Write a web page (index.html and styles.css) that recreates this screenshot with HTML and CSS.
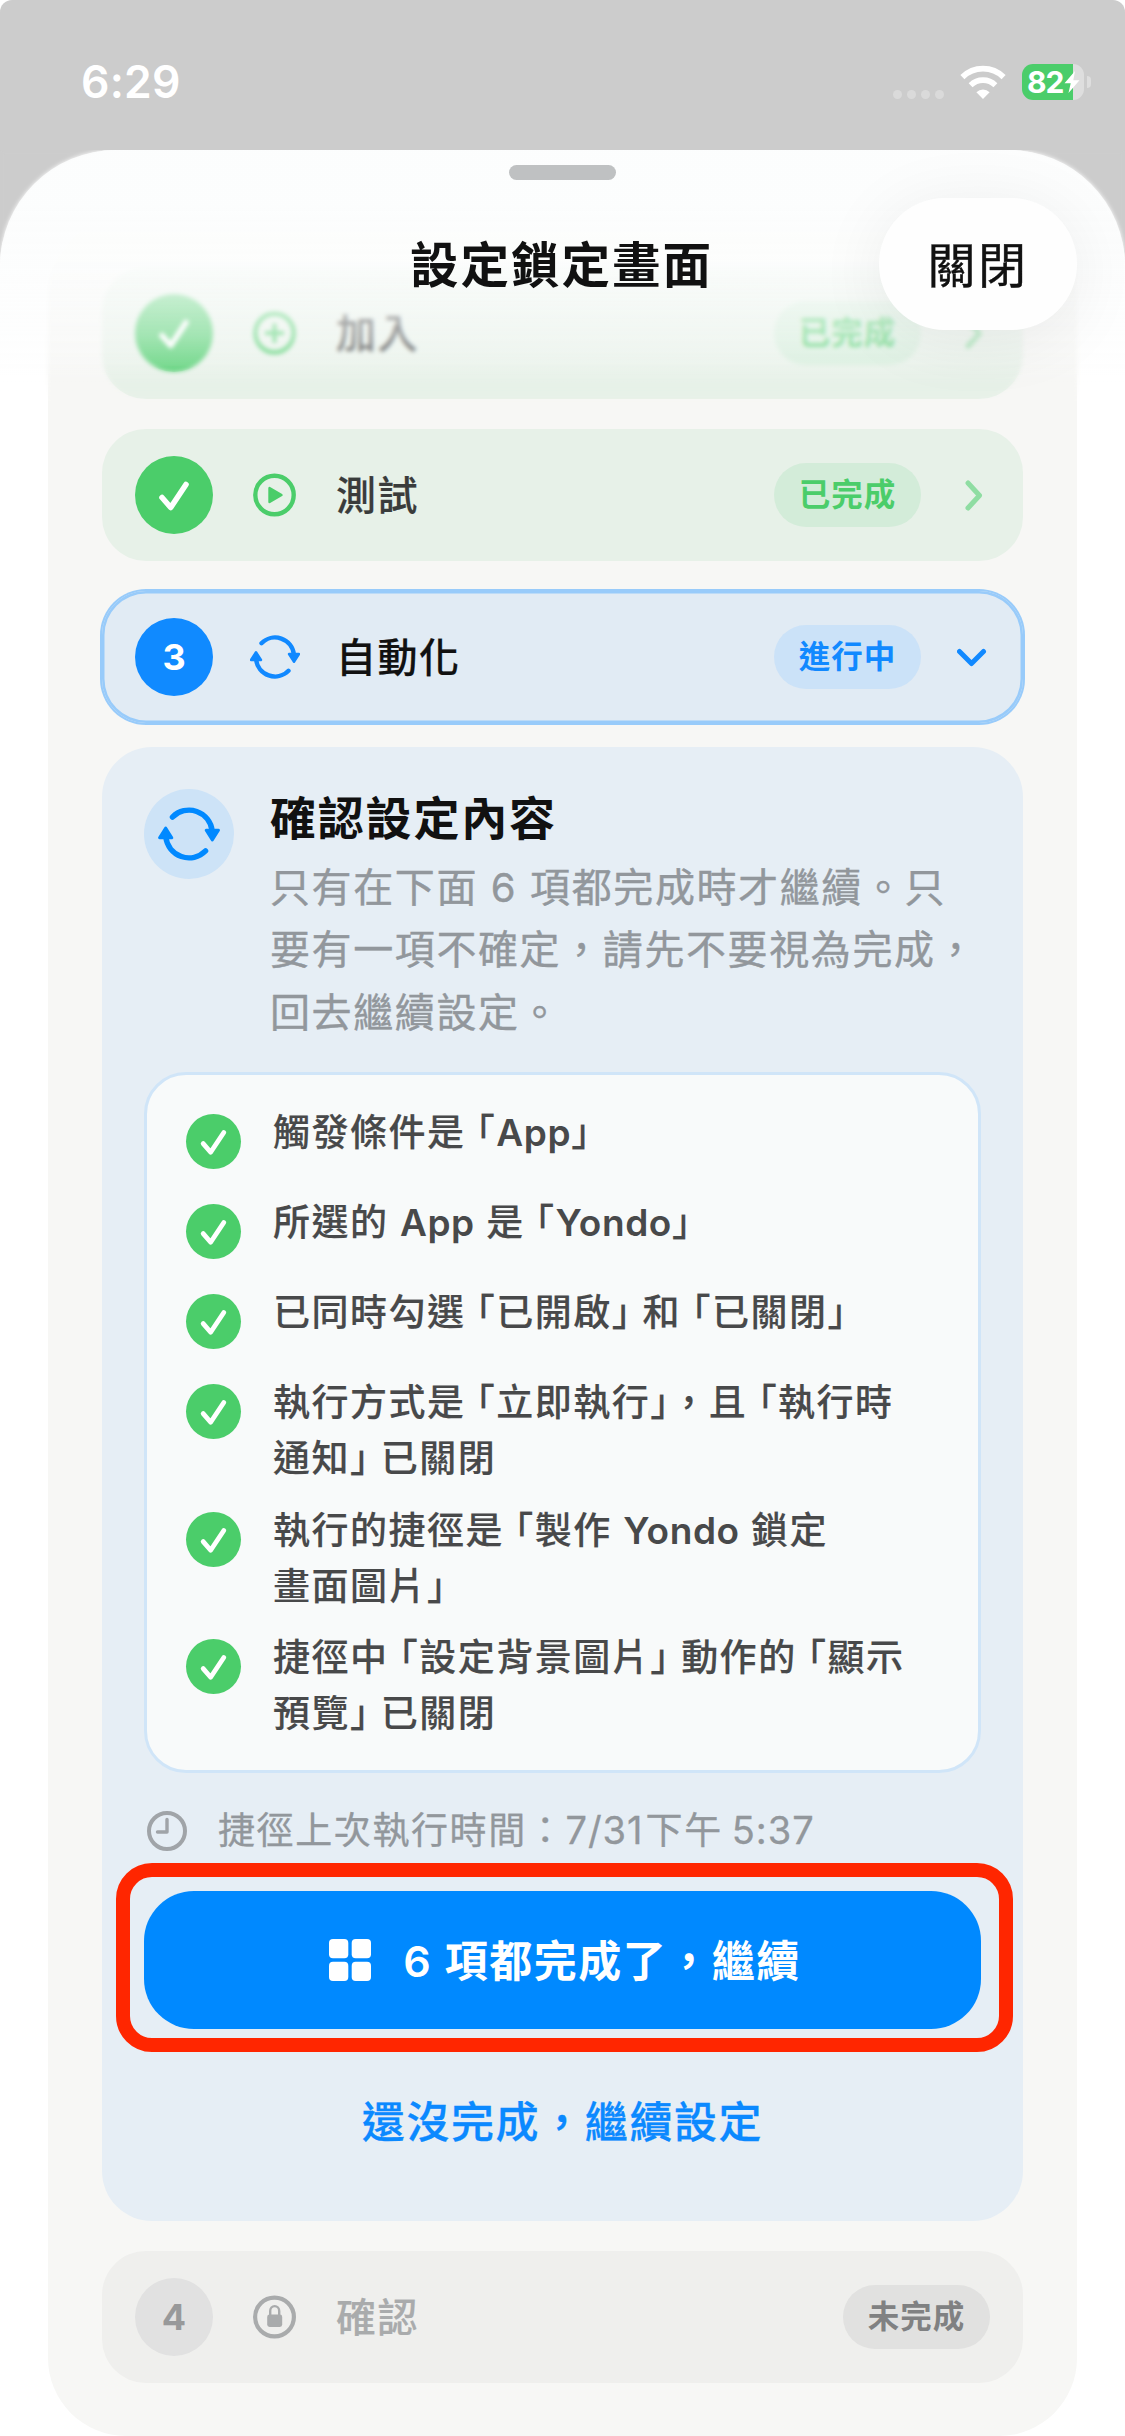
FILE: index.html
```html
<!DOCTYPE html>
<html lang="zh-Hant">
<head>
<meta charset="utf-8">
<title>設定鎖定畫面</title>
<link rel="stylesheet" href="styles.css">
</head>
<body>
<svg class="defs" width="0" height="0" aria-hidden="true">
  <symbol id="check" viewBox="0 0 78 78"><path d="M27 41.5 35.7 51.5 51 28.5" fill="none" stroke="currentColor" stroke-width="5.6" stroke-linecap="round" stroke-linejoin="round"/></symbol>
  <symbol id="sync" viewBox="0 0 50 44">
    <path d="M11.5 8.2A19 19 0 0 1 43.9 19.5" fill="none" stroke="currentColor" stroke-width="4.4" stroke-linecap="round"/>
    <path d="M38.5 35.8A19 19 0 0 1 6.1 24.5" fill="none" stroke="currentColor" stroke-width="4.4" stroke-linecap="round"/>
    <path d="M39 19h10l-5 7.8z" fill="currentColor" stroke="currentColor" stroke-width="2.4" stroke-linejoin="round"/>
    <path d="M11 25H1l5-7.8z" fill="currentColor" stroke="currentColor" stroke-width="2.4" stroke-linejoin="round"/>
  </symbol>
</svg>

<div class="screen">
  <header class="status">
    <span class="time">6:29</span>
    <div class="status-icons">
      <span class="dots"><i></i><i></i><i></i><i></i></span>
      <svg class="wifi" viewBox="0 0 46 34">
        <path d="M23 34l-6.6-6.8a9.6 9.6 0 0 1 13.2 0z" fill="#fff"/>
        <path d="M10.6 20.2a17.8 17.8 0 0 1 24.8 0" fill="none" stroke="#fff" stroke-width="5.6"/>
        <path d="M2.4 12.1a29.4 29.4 0 0 1 41.2 0" fill="none" stroke="#fff" stroke-width="5.8"/>
      </svg>
      <div class="battery"><span class="level">82</span>
        <svg class="bolt" viewBox="0 0 16 22"><path d="M11 0 .5 12.2h6.2L4.5 22 15.5 9.3H9.3z" fill="#fff"/></svg>
      </div>
      <i class="nub"></i>
    </div>
  </header>

  <main class="sheet">
    <section class="card">
      <div class="row done">
        <span class="disc"><svg><use href="#check"/></svg></span>
        <svg class="glyph" viewBox="0 0 50 44"><circle cx="24.5" cy="22" r="19.2" fill="none" stroke="currentColor" stroke-width="4.4"/><path d="M24.5 14v16M16.5 22h16" stroke="currentColor" stroke-width="4" stroke-linecap="round"/></svg>
        <span class="name">加入</span>
        <span class="badge">已完成</span>
        <svg class="chev" viewBox="0 0 33 33"><path d="M11 4l11.5 12.5L11 29" /></svg>
      </div>
      <div class="row done">
        <span class="disc"><svg><use href="#check"/></svg></span>
        <svg class="glyph" viewBox="0 0 50 44"><circle cx="24.5" cy="22" r="19.2" fill="none" stroke="currentColor" stroke-width="4.4"/><path d="M19.5 15v14l12-7z" fill="currentColor" stroke="currentColor" stroke-width="2.4" stroke-linejoin="round"/></svg>
        <span class="name">測試</span>
        <span class="badge">已完成</span>
        <svg class="chev" viewBox="0 0 33 33"><path d="M11 4l11.5 12.5L11 29" /></svg>
      </div>
      <div class="row active">
        <span class="disc">3</span>
        <svg class="glyph"><use href="#sync"/></svg>
        <span class="name">自動化</span>
        <span class="badge">進行中</span>
        <svg class="chev" viewBox="0 0 33 33"><path d="M2.5 10.5l12 12 12-12" /></svg>
      </div>

      <div class="panel">
        <div class="intro">
          <span class="intro-icon"><svg><use href="#sync"/></svg></span>
          <div>
            <h2>確認設定內容</h2>
            <p>只有在下面 6 項都完成時才繼續。只<br>要有一項不確定，請先不要視為完成，<br>回去繼續設定。</p>
          </div>
        </div>

        <ul class="list">
          <li><span class="tick"><svg><use href="#check"/></svg></span><span>觸發條件<b>是</b>「<em>App</em>」</span></li>
          <li><span class="tick"><svg><use href="#check"/></svg></span><span>所選的 <em>App</em> <b>是</b>「<em>Yondo</em>」</span></li>
          <li><span class="tick"><svg><use href="#check"/></svg></span><span>已同時勾<b>選</b>「已開啟<b>」和</b>「已關閉」</span></li>
          <li><span class="tick"><svg><use href="#check"/></svg></span><span>執行方式<b>是</b>「立即執行」，<b>且</b>「執行時<br>通知<b>」</b>已關閉</span></li>
          <li><span class="tick"><svg><use href="#check"/></svg></span><span>執行的捷徑<b>是</b>「製作 <em>Yondo</em> 鎖定<br>畫面圖片」</span></li>
          <li><span class="tick"><svg><use href="#check"/></svg></span><span>捷徑<b>中</b>「設定背景圖片<b>」</b>動作<b>的</b>「顯示<br>預覽<b>」</b>已關閉</span></li>
        </ul>

        <div class="last-run">
          <svg viewBox="0 0 40 40"><circle cx="20" cy="20" r="18" fill="none" stroke="currentColor" stroke-width="4"/><path d="M20 8.5V21H10.5" fill="none" stroke="currentColor" stroke-width="3.4" stroke-linecap="round" stroke-linejoin="round"/></svg>
          <span>捷徑上次執行時間：<span class="latin">7/31</span><span class="noon">下午</span> <span class="latin">5:37</span></span>
        </div>

        <div class="cta-wrap">
          <button class="cta">
            <svg viewBox="0 0 42 42"><g fill="currentColor"><rect width="19.3" height="19.3" rx="4"/><rect x="22.7" width="19.3" height="19.3" rx="4"/><rect y="22.7" width="19.3" height="19.3" rx="4"/><rect x="22.7" y="22.7" width="19.3" height="19.3" rx="4"/></g></svg>
            <span>6 項都完成了，繼續</span>
          </button>
          <div class="highlight"></div>
        </div>
        <a class="later">還沒完成，繼續設定</a>
      </div>

      <div class="row todo">
        <span class="disc">4</span>
        <svg class="glyph" viewBox="0 0 50 44"><circle cx="24.5" cy="22" r="19.4" fill="none" stroke="currentColor" stroke-width="4.2"/><rect x="17.2" y="19.5" width="15" height="12.4" rx="2.4" fill="currentColor"/><path d="M20.2 20v-4a4.5 4.9 0 0 1 9 0v4" fill="none" stroke="currentColor" stroke-width="2.4"/></svg>
        <span class="name">確認</span>
        <span class="badge">未完成</span>
      </div>
    </section>

    <div class="nav">
      <div class="fade"></div>
      <i class="grabber"></i>
      <h1>設定鎖定畫面</h1>
      <button class="close">關閉</button>
    </div>
  </main>
</div>
</body>
</html>
```
FILE: styles.css
```css
* { box-sizing: border-box; }

body {
  margin: 0;
  background: #fff;
  font-family: Inter, "Noto Sans CJK TC", sans-serif;
  -webkit-font-smoothing: antialiased;
}

h1, h2, p, ul { margin: 0; padding: 0; }
button { border: 0; font-family: inherit; padding: 0; }
i { display: block; }
.defs { position: absolute; }

.screen {
  width: 1125px;
  height: 2436px;
  overflow: hidden;
  border-radius: 12px 12px 0 0;
  background: linear-gradient(#ccc 300px, #fff 300px);
}

/* status bar */
.status {
  height: 150px;
  padding: 64px 34px 0 81px;
  display: flex;
  justify-content: space-between;
  color: #fff;
}
.time { font-size: 44.5px; font-weight: 600; line-height: 37px; letter-spacing: 0.2px; }
.status-icons { display: flex; height: 36px; align-items: center; }
.dots { display: flex; gap: 5px; margin: 24px 16px 0 0; }
.dots i { width: 9px; height: 9px; border-radius: 50%; background: #dadada; }
.wifi { width: 46px; height: 34px; margin-right: 16px; }
.battery {
  width: 62px;
  height: 36px;
  border-radius: 11px;
  background: linear-gradient(90deg, #4bcd6a 51px, #dedede 51px);
  display: flex;
  align-items: center;
  padding-left: 5px;
}
.level { font-size: 30px; font-weight: 700; line-height: 36px; letter-spacing: -1px; width: 37px; }
.bolt { width: 16px; height: 22px; }
.nub { width: 4px; height: 12px; margin-left: 3px; border-radius: 0 4px 4px 0; background: #dedede; }

/* sheet */
.sheet {
  position: relative;
  height: 2286px;
  padding: 63px 48px 0;
  border-radius: 116px 116px 0 0;
  background: #fff;
  overflow: hidden;
}
.card {
  height: 2223px;
  padding: 54px;
  border-radius: 78px;
  background: #f7f7f5;
  display: flex;
  flex-direction: column;
}

/* step rows */
.row {
  height: 132px;
  flex: none;
  margin-bottom: 30px;
  padding: 0 33px;
  border-radius: 44px;
  display: flex;
  align-items: center;
}
.disc {
  width: 78px;
  height: 78px;
  border-radius: 50%;
  display: flex;
  align-items: center;
  justify-content: center;
  color: #fff;
  font-size: 36px;
  font-weight: 700;
}
.disc svg { width: 78px; height: 78px; }
.glyph { width: 50px; height: 44px; margin-left: 37px; }
.name {
  flex: 1;
  margin-left: 36px;
  font-size: 40px;
  font-weight: 500;
  letter-spacing: 1.5px;
  line-height: 60px;
  padding-top: 1px;
  -webkit-text-stroke: 0.2px currentColor;
}
.badge {
  width: 147px;
  height: 64px;
  border-radius: 32px;
  text-align: center;
  font-size: 31.5px;
  font-weight: 700;
  letter-spacing: 1px;
  line-height: 63px;
}
.chev { width: 33px; height: 33px; margin-left: 36px; }
.chev path { fill: none; stroke: currentColor; stroke-width: 5; stroke-linecap: round; stroke-linejoin: round; }

.done { background: #e7f1e8; color: #4bcd6a; }
.done .disc { background: #4bcd6a; }
.done .name { color: #3a3c3b; }
.done .badge { background: #d3ecd9; }
.done .chev { color: #8fdda2; }

.active {
  background: #e1ebf4;
  color: #1189ff;
  margin-bottom: 24px;
  box-shadow: 0 0 0 2px #98cbfa, inset 0 0 0 2.5px #98cbfa;
}
.active .disc { background: #108aff; color: #fff; }
.active .name { color: #111; }
.active .badge { background: #cbe2f8; }

.todo { background: #efefed; color: #a9abac; margin-bottom: 0; }
.todo .disc { background: #e1e1e1; color: #98999a; }
.todo .badge { background: #e1e1e0; color: #808182; }

/* open step */
.panel {
  height: 1474px;
  flex: none;
  margin-bottom: 30px;
  padding: 42px;
  border-radius: 50px;
  background: #e6eef5;
  display: flex;
  flex-direction: column;
}
.intro { display: flex; gap: 36px; height: 283px; }
.intro-icon {
  width: 90px;
  height: 90px;
  border-radius: 50%;
  background: #cde3f7;
  color: #0089ff;
  display: flex;
  align-items: center;
  justify-content: center;
}
.intro-icon svg { width: 62px; height: 54px; }
h2 { font-size: 46px; font-weight: 700; letter-spacing: 1.8px; line-height: 58px; color: #111; }
.intro p {
  margin-top: 10px;
  font-size: 40px;
  letter-spacing: 1.6px;
  line-height: 62.4px;
  color: #92979c;
  white-space: nowrap;
  -webkit-text-stroke: 0.4px currentColor;
}

.list {
  height: 701px;
  padding: 30px 0 0 39px;
  border: 3px solid #d0e5f8;
  border-radius: 42px;
  background: #f8fafa;
  list-style: none;
}
.list li {
  display: flex;
  gap: 32px;
  height: 90px;
  font-size: 37px;
  font-weight: 500;
  letter-spacing: 1.5px;
  line-height: 56px;
  color: #48494a;
  white-space: nowrap;
  -webkit-text-stroke: 0.15px currentColor;
}
.list li:nth-child(n+4) { height: 127.5px; }
/* tightens the gap beside corner brackets */
.list b { font-weight: inherit; letter-spacing: -6.2px; }
.list em { font-style: normal; font-weight: 600; letter-spacing: 0.6px; -webkit-text-stroke: 0; }
.tick {
  flex: none;
  width: 55px;
  height: 55px;
  margin-top: 9px;
  border-radius: 50%;
  background: #4bcd6a;
  color: #fff;
}
.tick svg { width: 67px; height: 67px; margin: -6px; display: block; }

.last-run {
  display: flex;
  align-items: center;
  gap: 31px;
  height: 56px;
  margin: 30px 0 32px 3px;
  font-size: 37px;
  letter-spacing: 1.6px;
  color: #92979c;
  white-space: nowrap;
  -webkit-text-stroke: 0.3px currentColor;
}
.last-run > span { line-height: 52px; padding-bottom: 1px; }
.last-run svg { width: 40px; height: 40px; color: #a0a4a8; }
.latin { font-size: 38px; letter-spacing: 1px; }
.noon { margin: 0 -3px 0 2px; }

.cta-wrap { position: relative; }
.cta {
  width: 837px;
  height: 138px;
  padding-left: 5px;
  border-radius: 50px;
  background: #0089ff;
  color: #fff;
  display: flex;
  align-items: center;
  justify-content: center;
  gap: 32px;
  font-size: 43px;
  font-weight: 600;
  letter-spacing: 1.5px;
}
.cta svg { width: 42px; height: 42px; }
.cta span { padding-bottom: 5px; }
.highlight {
  position: absolute;
  inset: -28px -32px -23px -28px;
  border: 14px solid #ff2600;
  border-radius: 36px;
}
.later {
  margin-top: 61px;
  text-align: center;
  font-size: 43px;
  font-weight: 500;
  letter-spacing: 1.6px;
  line-height: 64px;
  color: #0b89ff;
  -webkit-text-stroke: 0.3px currentColor;
}

/* floating title bar */
.nav { position: absolute; inset: 0 0 auto; height: 270px; }
.fade {
  position: absolute;
  inset: 0;
  background: linear-gradient(rgba(252,253,253,.92) 55px, rgba(252,253,253,.9) 110px, rgba(252,253,253,.72) 140px, rgba(252,253,253,.5) 185px, rgba(252,253,253,.24) 220px, rgba(252,253,253,0) 255px);
  backdrop-filter: blur(2px);
  -webkit-mask-image: linear-gradient(#000 215px, transparent 255px);
  mask-image: linear-gradient(#000 215px, transparent 255px);
}
.grabber {
  position: absolute;
  left: 509px;
  top: 15px;
  width: 107px;
  height: 15px;
  border-radius: 8px;
  background: #bfc1c2;
}
h1 {
  position: absolute;
  inset: 81px 0 auto;
  text-align: center;
  font-size: 48.5px;
  font-weight: 700;
  letter-spacing: 2px;
  line-height: 70px;
  text-indent: -2px;
  color: #111;
}
.close {
  position: absolute;
  right: 48px;
  top: 48px;
  width: 198px;
  height: 132px;
  padding-bottom: 4px;
  border-radius: 66px;
  background: #fefefe;
  box-shadow: 0 8px 70px rgba(0,0,0,.07);
  font-size: 48px;
  letter-spacing: 2.4px;
  color: #111;
  -webkit-text-stroke: 0.4px currentColor;
}
```
